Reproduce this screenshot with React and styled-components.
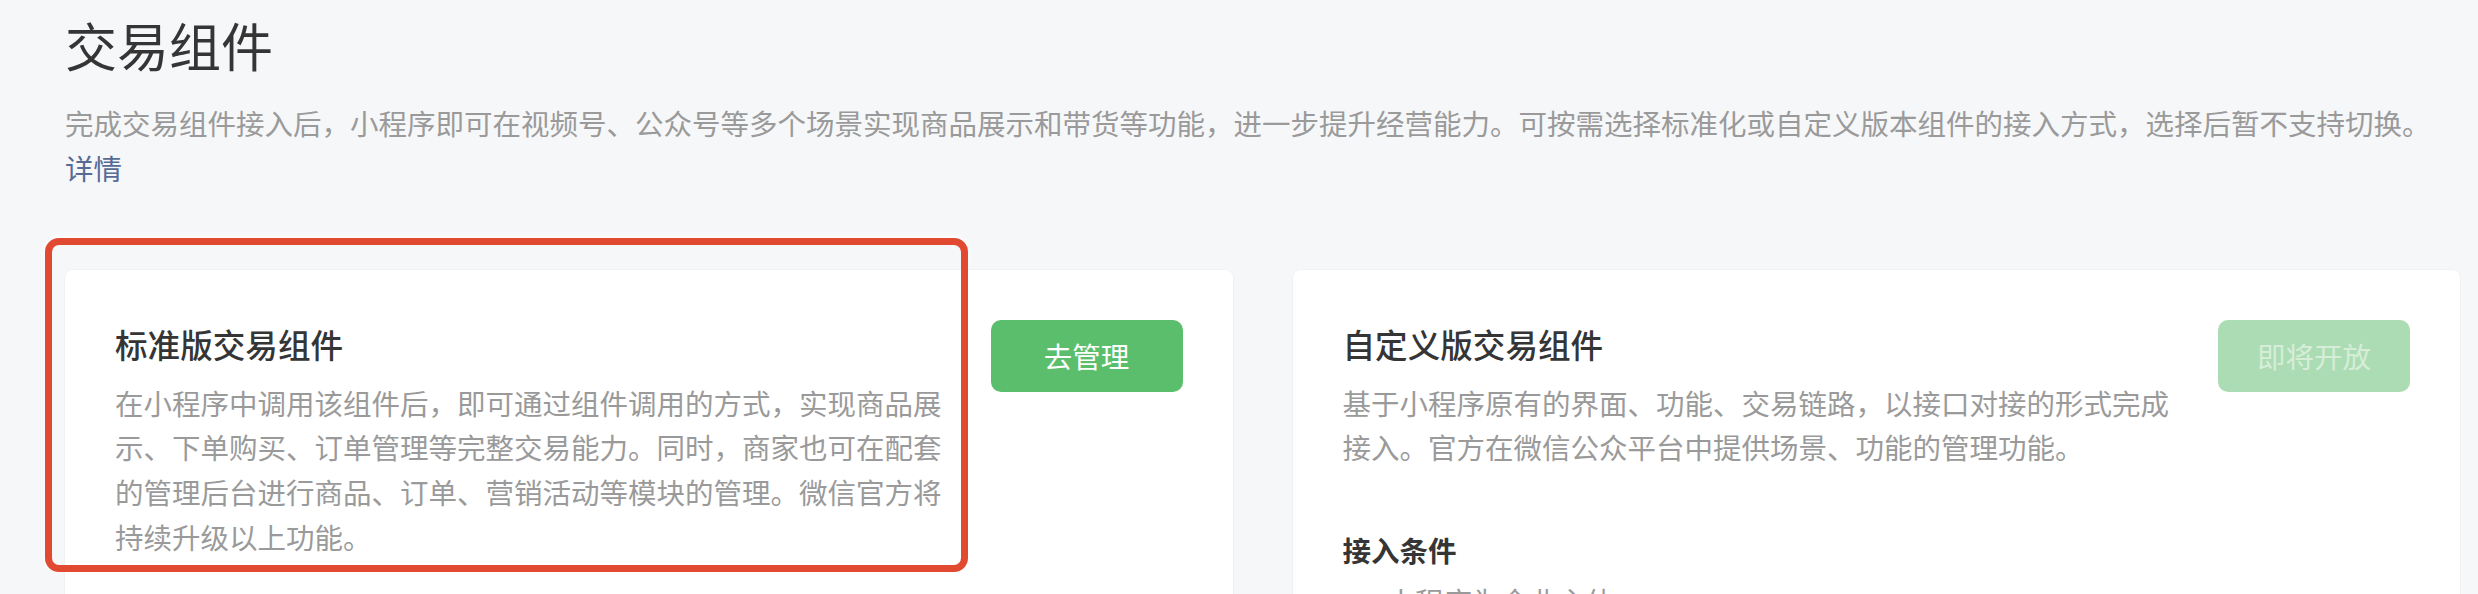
import React from "react";
import styled, { createGlobalStyle } from "styled-components";

const GlobalStyle = createGlobalStyle`
  html, body {
    margin: 0;
    padding: 0;
    background: #f6f7f9;
  }
  body {
    font-family: "Noto Sans CJK SC", "Noto Sans", sans-serif;
    color: #353535;
    overflow: hidden;
  }
`;

const Page = styled.div`
  width: 2478px;
  height: 594px;
  box-sizing: border-box;
  padding: 9px 18px 0 65px;
  overflow: hidden;
`;

const Title = styled.h1`
  margin: 0;
  font-size: 52px;
  line-height: 72px;
  font-weight: 400;
  color: #353535;
`;

const Intro = styled.p`
  margin: 20px 0 0;
  font-size: 28.5px;
  line-height: 44.8px;
  color: #9a9a9a;
`;

const Link = styled.a`
  display: inline-block;
  white-space: nowrap;
  color: #576b95;
  text-decoration: none;
`;

const Cards = styled.div`
  display: grid;
  grid-template-columns: 1fr 1fr;
  gap: 60px;
  margin-top: 79px;
`;

const Card = styled.section`
  position: relative;
  background: #ffffff;
  border-radius: 8px;
  box-shadow: 0 0 0 1px rgba(0, 0, 0, 0.015), 0 1px 3px rgba(0, 0, 0, 0.03);
  padding: 50px 50px 0;
  min-height: 400px;
`;

const CardHeader = styled.div`
  display: flex;
  align-items: flex-start;
  gap: 40px;
`;

const CardText = styled.div`
  flex: 1;
  min-width: 0;
`;

const CardTitle = styled.h2`
  margin: 0;
  font-size: 32.6px;
  line-height: 48px;
  font-weight: 500;
  color: #353535;
`;

const CardDesc = styled.p`
  margin: 13px 0 0;
  font-size: 28.5px;
  line-height: 44.8px;
  color: #9a9a9a;
`;

const Button = styled.button`
  flex: none;
  width: 192px;
  height: 72px;
  border: none;
  border-radius: 10px;
  font-family: inherit;
  font-size: 28.5px;
  background: ${(p) => (p.disabled ? "#acdcb4" : "#5bbe6c")};
  color: ${(p) => (p.disabled ? "#d6eed9" : "#ffffff")};
  cursor: ${(p) => (p.disabled ? "default" : "pointer")};
`;

const SectionTitle = styled.h3`
  margin: 58px 0 0;
  font-size: 28.5px;
  line-height: 44.8px;
  font-weight: 600;
  color: #353535;
`;

const List = styled.ul`
  margin: 6px 0 0;
  padding: 0 0 0 44px;
  font-size: 28.5px;
  line-height: 44.8px;
  color: #9a9a9a;
`;

const Highlight = styled.div`
  position: absolute;
  left: -20px;
  top: -32px;
  width: 923px;
  height: 334px;
  box-sizing: border-box;
  border: 7px solid #e14a30;
  border-radius: 14px;
  box-shadow: 0 -2px 6px rgba(255, 255, 255, 0.9);
  pointer-events: none;
`;

export default function App() {
  return (
    <>
      <GlobalStyle />
      <Page>
        <Title>交易组件</Title>
        <Intro>
          完成交易组件接入后，小程序即可在视频号、公众号等多个场景实现商品展示和带货等功能，进一步提升经营能力。可按需选择标准化或自定义版本组件的接入方式，选择后暂不支持切换。
          <Link href="#">详情</Link>
        </Intro>
        <Cards>
          <Card>
            <Highlight />
            <CardHeader>
              <CardText>
                <CardTitle>标准版交易组件</CardTitle>
                <CardDesc>
                  在小程序中调用该组件后，即可通过组件调用的方式，实现商品展示、下单购买、订单管理等完整交易能力。同时，商家也可在配套的管理后台进行商品、订单、营销活动等模块的管理。微信官方将持续升级以上功能。
                </CardDesc>
              </CardText>
              <Button>去管理</Button>
            </CardHeader>
          </Card>
          <Card>
            <CardHeader>
              <CardText>
                <CardTitle>自定义版交易组件</CardTitle>
                <CardDesc>
                  基于小程序原有的界面、功能、交易链路，以接口对接的形式完成接入。官方在微信公众平台中提供场景、功能的管理功能。
                </CardDesc>
              </CardText>
              <Button disabled>即将开放</Button>
            </CardHeader>
            <SectionTitle>接入条件</SectionTitle>
            <List>
              <li>小程序为企业主体</li>
            </List>
          </Card>
        </Cards>
      </Page>
    </>
  );
}
